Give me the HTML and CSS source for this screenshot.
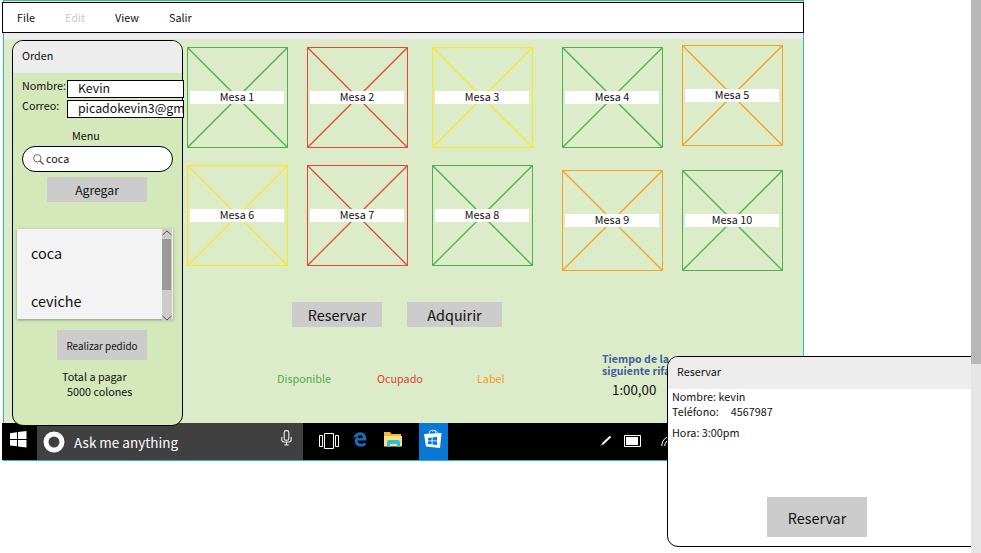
FILE: index.html
```html
<!DOCTYPE html>
<html lang="es">
<head>
<meta charset="utf-8">
<title>Mesas</title>
<link rel="stylesheet" href="styles.css">
</head>
<body>
<main class="window">
  <nav class="menubar"><span class="m-file">File</span><span class="m-edit">Edit</span><span class="m-view">View</span><span>Salir</span></nav>
  <div class="content">
    <section class="order">
      <header class="order-head">Orden</header>
      <div class="field"><label>Nombre:</label><div class="input">Kevin</div></div>
      <div class="field"><label>Correo:</label><div class="input">picadokevin3@gm</div></div>
      <div class="menu-title">Menu</div>
      <div class="search">
        <svg width="11" height="11" viewBox="0 0 11 11" fill="none" stroke="#555" stroke-width="0.9"><circle cx="4.3" cy="4.3" r="3.7"/><path d="M7 7L10.5 10.5" stroke-width="1.3"/></svg>
        <span>coca</span>
      </div>
      <div class="btn add">Agregar</div>
      <div class="list">
        <div class="items"><span>coca</span><span>ceviche</span></div>
        <div class="track">
          <svg width="10" height="8" viewBox="0 0 10 8" fill="none" stroke="#555"><path d="M0.5 6L5 2L9.5 6"/></svg>
          <div class="thumb"></div>
          <svg class="down" width="10" height="8" viewBox="0 0 10 8" fill="none" stroke="#555"><path d="M0.5 2L5 6L9.5 2"/></svg>
        </div>
      </div>
      <div class="btn send">Realizar pedido</div>
      <div class="total">Total a pagar</div>
      <div class="amount">5000 colones</div>
    </section>
    <section class="floor">
      <div class="tables">
        <div class="table green"><svg viewBox="0 0 101 101"><g id="frame"><path d="M.5 .5H100.5V100.5H.5Z"/><path class="cross" d="M.5 .5L100.5 100.5M100.5 .5L.5 100.5"/></g></svg><span>Mesa 1</span></div>
        <div class="table red"><svg viewBox="0 0 101 101"><use href="#frame"/></svg><span>Mesa 2</span></div>
        <div class="table yellow"><svg viewBox="0 0 101 101"><use href="#frame"/></svg><span>Mesa 3</span></div>
        <div class="table green"><svg viewBox="0 0 101 101"><use href="#frame"/></svg><span>Mesa 4</span></div>
        <div class="table orange raised"><svg viewBox="0 0 101 101"><use href="#frame"/></svg><span>Mesa 5</span></div>
        <div class="table yellow"><svg viewBox="0 0 101 101"><use href="#frame"/></svg><span>Mesa 6</span></div>
        <div class="table red"><svg viewBox="0 0 101 101"><use href="#frame"/></svg><span>Mesa 7</span></div>
        <div class="table green"><svg viewBox="0 0 101 101"><use href="#frame"/></svg><span>Mesa 8</span></div>
        <div class="table orange lowered"><svg viewBox="0 0 101 101"><use href="#frame"/></svg><span>Mesa 9</span></div>
        <div class="table green lowered"><svg viewBox="0 0 101 101"><use href="#frame"/></svg><span>Mesa 10</span></div>
      </div>
      <div class="actions"><div class="btn reserve">Reservar</div><div class="btn acquire">Adquirir</div></div>
      <div class="footer">
        <div class="legend"><span class="t-green">Disponible</span><span class="t-red">Ocupado</span><span class="t-orange">Label</span></div>
        <div class="raffle"><b>Tiempo de la<br>siguiente rifa</b><div class="clock">1:00,00</div></div>
      </div>
    </section>
  </div>
  <footer class="taskbar">
    <div class="start"><svg width="17" height="17" viewBox="0 0 17 17" fill="#fff"><path d="M0 2.3L7 1.3V8H0ZM8 1.1L16.5 0V8H8ZM0 9H7V15.3L0 14.4ZM8 9H16.5V16.6L8 15.5Z"/></svg></div>
    <div class="cortana">
      <svg width="22" height="22" viewBox="0 0 22 22" fill="none" stroke="#fff" stroke-width="5"><circle cx="11" cy="11" r="8"/></svg>
      <span>Ask me anything</span>
      <svg class="mic" width="11" height="16" viewBox="0 0 11 16" fill="none" stroke="#eee" stroke-width="1.1"><rect x="3.2" y=".6" width="4.6" height="9.6" rx="1.8"/><path d="M.8 7V9.5Q.8 12 3.2 12H7.8Q10.2 12 10.2 9.5V7M5.5 12V15M3.2 15H7.8"/></svg>
    </div>
    <svg class="views" width="21" height="16" viewBox="0 0 21 16" fill="none" stroke="#fff"><path d="M.5 2.5H3.5V13.5H.5ZM5.5 .5H14.5V15.5H5.5ZM16.5 2.5H19.5V13.5H16.5Z"/></svg>
    <svg class="edge" width="14" height="15" viewBox="0 0 14 15" fill="#2267b4"><path d="M.2 6.6C.8 2.6 3.5.3 7.1.3c4 0 6.3 2.9 6.3 6.6v1.5H4.6c.1 2.4 2 3.3 4.1 3.3 1.5 0 2.8-.4 4-1.1v3c-1.3.7-2.9 1.1-4.6 1.1-3.9 0-6.4-2.2-6.4-5.6 0-2.1 1.1-3.8 2.9-4.7C2.7 4.6 1.2 5.3.2 6.6ZM4.7 6H9.7C9.7 4.3 8.9 3.3 7.3 3.3 5.9 3.3 5 4.3 4.7 6Z"/></svg>
    <svg class="folder" width="18" height="15" viewBox="0 0 18 15"><path fill="#e8bd38" d="M0 0H6L7.5 2H17V14H0Z"/><path fill="#fbe184" d="M0 4H18V14.5H0Z"/><path fill="#32bdde" d="M3 15V10Q3 8 5 8H14Q16 8 16 10V15H13V12H6V15Z"/></svg>
    <div class="store"><svg width="18" height="20" viewBox="0 0 18 20"><path d="M5 5Q5 1 8.5 1T12 5M8 3Q11-1 14 4" fill="none" stroke="#bce0fa"/><path fill="#fff" d="M0 5L17.5 4L16 19L2 17.5Z"/><path fill="#0878d4" d="M4 9L7.7 8.5V11.5H4ZM8.5 8.4L13 7.8V11.5H8.5ZM4 12.3H7.7V15.3L4 14.9ZM8.5 12.3H13V15.9L8.5 15.4Z"/></svg></div>
    <svg class="pen" width="12" height="12" viewBox="0 0 12 12" stroke="#fff"><path d="M1 10.5L3 8.5" stroke-width="1"/><path d="M2.5 9L10.5 1.5" stroke-width="2"/></svg>
    <svg class="battery" width="18" height="12" viewBox="0 0 18 12"><path d="M.5 .5H16.5V11.5H.5Z" fill="none" stroke="#fff"/><path fill="#fff" d="M2 2H14V10H2Z"/></svg>
    <svg class="wifi" width="14" height="12" viewBox="0 0 14 12" fill="none" stroke="#fff"><path d="M.7 11Q1 2 12 0M3.7 11Q4 5 12 3M6.5 11Q7 8 12 7"/></svg>
  </footer>
</main>
<aside class="dialog">
  <header class="dialog-head">Reservar</header>
  <div class="dialog-body">
    <div>Nombre: kevin</div>
    <div class="phone"><span>Teléfono:</span><span>4567987</span></div>
    <div class="hour">Hora: 3:00pm</div>
    <div class="btn confirm">Reservar</div>
  </div>
</aside>
<div class="page-scroll"><div class="page-thumb"></div></div>
</body>
</html>
```
FILE: styles.css
```css
* { box-sizing: border-box; }
body {
  margin: 0;
  height: 553px;
  overflow: hidden;
  position: relative;
  background: #fff;
  color: #111;
  font-family: "Noto Sans CJK SC", "Noto Sans", sans-serif;
  font-size: 10.8px;
  line-height: 14px;
  white-space: nowrap;
}
svg { display: block; flex: none; }
.window {
  width: 801px;
  height: 461px;
  margin-left: 3px;
  border: 1px solid #35b5b5;
  background: #dcecc9;
}
.menubar {
  display: flex;
  align-items: center;
  width: 802px;
  height: 31px;
  margin: 1px 0 0 -2px;
  padding: 0 0 2px 14px;
  border: 1px solid #000;
  background: #fff;
}
.m-file { width: 48px; }
.m-edit { width: 50px; color: #c8c8c8; }
.m-view { width: 54px; }
.content {
  display: flex;
  height: 390px;
  padding: 7px 0 0 8px;
  background: linear-gradient(#ededed 6px, #dcecc9 6px);
}
.order {
  position: relative;
  z-index: 1;
  width: 171px;
  height: 386px;
  flex: none;
  border: 1px solid #000;
  border-radius: 11px;
  background: #d5e8b9;
}
.order-head {
  height: 32px;
  padding: 7px 9px;
  border-radius: 10px 10px 0 0;
  background: #ededed;
}
.field { display: flex; height: 20px; padding-left: 9px; }
.field label { width: 45px; flex: none; padding-top: 5px; }
.input {
  width: 117px;
  height: 18px;
  flex: none;
  margin-top: 7px;
  padding-left: 10px;
  border: 1px solid #000;
  background: #fff;
  font-size: 12.3px;
  line-height: 14px;
}
.menu-title { margin: 15px 0 4px 59px; }
.search {
  display: flex;
  align-items: center;
  gap: 2px;
  width: 151px;
  height: 26px;
  margin-left: 9px;
  padding-left: 10px;
  border: 1px solid #000;
  border-radius: 13px;
  background: #fff;
}
.search span { padding-bottom: 2px; }
.btn { display: flex; align-items: center; justify-content: center; background: #ccc; }
.add { width: 100px; height: 25px; margin: 5px 0 0 34px; font-size: 12.2px; }
.list {
  display: flex;
  width: 156px;
  height: 90px;
  margin: 27px 0 0 4px;
  background: #f3f3f3;
  box-shadow: 0 1px 3px rgba(0, 0, 0, .35);
}
.items {
  display: flex;
  flex-direction: column;
  gap: 28px;
  width: 145px;
  padding: 14px 0 0 14px;
  font-size: 14.4px;
  line-height: 20px;
}
.track { width: 10px; height: 92px; background: #ccc; }
.thumb { width: 9px; height: 51px; margin-top: 2px; background: #999; }
.down { margin-top: 24px; }
.send { width: 90px; height: 30px; margin: 11px 0 0 44px; padding-top: 1px; font-size: 9.9px; }
.total { margin: 9px 0 0 49px; }
.amount { margin: 1px 0 0 54px; }
.floor { padding: 7px 0 0 4px; }
.tables {
  display: grid;
  grid-template-columns: 120px 125px 130px 120px 101px;
  grid-template-rows: 118px 101px;
}
.table { width: 101px; height: 101px; }
.table svg { width: 101px; height: 101px; fill: none; stroke: currentColor; }
.cross { stroke-width: 1.3; }
.table span {
  display: block;
  position: relative;
  width: 94px;
  height: 13px;
  margin: -57px 0 0 3px;
  background: #fff;
  color: #111;
  text-align: center;
  line-height: 11px;
}
.green { color: #4caf50; }
.red { color: #e8443a; }
.yellow { color: #f9e635; }
.yellow svg { stroke-width: 1.3; }
.orange { color: #f5a01e; }
.raised { margin-top: -2px; }
.lowered { margin-top: 5px; }
.actions { display: flex; gap: 25px; margin: 36px 0 0 105px; font-size: 14.4px; }
.actions .btn { height: 25px; padding-top: 1px; }
.reserve { width: 90px; }
.acquire { width: 95px; }
.footer { display: flex; padding-top: 25px; }
.legend { display: flex; width: 415px; padding: 19px 0 0 90px; }
.t-green { width: 100px; color: #50a852; }
.t-red { width: 100px; color: #d94236; }
.t-orange { color: #f39b25; }
.raffle { padding-top: 1px; }
.raffle b { display: block; color: #3f5c9c; font-size: 10.6px; line-height: 12px; }
.clock { margin: 3px 0 0 10px; font-size: 13.3px; line-height: 20px; }
.taskbar {
  display: flex;
  height: 37px;
  margin-left: -2px;
  background: #000;
}
.start { width: 35px; padding: 8px 0 0 8px; }
.cortana {
  display: flex;
  width: 266px;
  padding: 8px 0 0 6px;
  background: #404040;
  color: #fff;
  font-size: 13.5px;
  line-height: 23px;
}
.cortana span { width: 216px; padding-left: 9px; }
.mic { margin-top: -1px; }
.views { margin: 10px 0 0 16px; }
.edge { margin: 9px 0 0 13px; }
.folder { margin: 9px 0 0 17px; }
.store { width: 29px; height: 37px; margin-left: 17px; padding: 6px 0 0 5px; background: #0878d4; }
.pen { margin: 12px 0 0 152px; }
.battery { margin: 12px 0 0 12px; }
.wifi { margin: 12px 0 0 19px; }
.dialog {
  position: absolute;
  left: 667px;
  top: 356px;
  z-index: 2;
  width: 314px;
  height: 191px;
  border: 1px solid #000;
  border-radius: 11px 0 0 11px;
  background: #fff;
}
.dialog-head {
  height: 32px;
  padding: 7px 9px;
  border-radius: 10px 0 0 0;
  background: #ededed;
}
.dialog-body { padding-left: 4px; }
.phone { display: flex; gap: 12px; margin-top: 1px; }
.hour { margin-top: 7px; }
.confirm { width: 100px; height: 40px; margin: 58px 0 0 95px; padding-top: 1px; font-size: 14.4px; }
.page-scroll {
  position: absolute;
  right: 0;
  top: 0;
  z-index: 3;
  width: 10px;
  height: 553px;
  background: #e6e6e6;
}
.page-thumb { height: 364px; background: #b8b8b8; }
```
